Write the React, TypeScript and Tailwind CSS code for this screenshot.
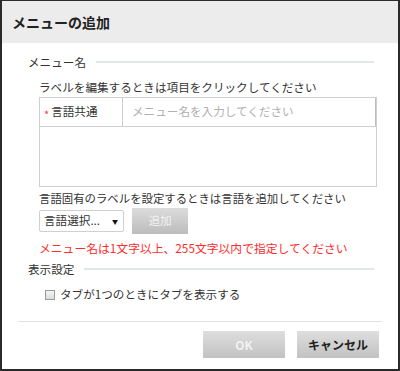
import React from "react";

const font = { fontFamily: '"Noto Sans CJK JP", "Noto Sans", sans-serif' };

const SectionTitle = ({ label }: { label: string }) => (
  <div className="flex items-center pl-[26px] pr-[24px] h-[16px]">
    <span className="text-[11.6px] leading-[16px] text-[#333] whitespace-nowrap">{label}</span>
    <div className="flex-1 h-[2px] bg-[#e2e7ea] ml-[10px]" />
  </div>
);

const App = () => {
  return (
    <div
      className="w-[400px] h-[371px] bg-white border-t border-l-2 border-r-2 border-b-2 border-[#2a2a2a] flex flex-col overflow-hidden"
      style={font}
    >
      <div className="h-[42px] bg-[#ececec] flex items-center pl-[10px] shrink-0">
        <span className="text-[14px] font-bold text-[#222]">メニューの追加</span>
      </div>

      <div className="mt-[11px]">
        <SectionTitle label="メニュー名" />
      </div>

      <div className="pl-[37px] pr-[24px]">
        <p className="mt-[9px] text-[11.6px] leading-[16px] text-[#333] whitespace-nowrap">
          ラベルを編集するときは項目をクリックしてください
        </p>

        <div className="mt-[2px] w-[338px] h-[90px] border border-[#cfcfcf] flex flex-col">
          <div className="h-[29px] flex border-b border-[#cfcfcf]">
            <div className="w-[83px] border-r border-[#cfcfcf] flex items-center pl-[4px]">
              <span className="text-[#ff3b3b] text-[11px] mr-[2px] leading-none translate-y-[2px]">*</span>
              <span className="text-[11.6px] text-[#333]">言語共通</span>
            </div>
            <div className="flex-1 flex items-center pl-[9px] border-r border-[#bdbdbd]">
              <span className="text-[11.6px] text-[#b0b0b0]">メニュー名を入力してください</span>
            </div>
          </div>
          <div className="flex-1" />
        </div>

        <p className="mt-[3px] text-[11.4px] leading-[16px] text-[#333] whitespace-nowrap">
          言語固有のラベルを設定するときは言語を追加してください
        </p>

        <div className="mt-[2px] flex items-center gap-[8px]">
          <div className="w-[85px] h-[22px] border border-[#d0d0d0] rounded-[2px] flex items-center justify-between pl-[4px] pr-[5px]">
            <span className="text-[11.6px] text-[#333]">言語選択...</span>
            <span className="text-[6px] text-[#111]">▼</span>
          </div>
          <div className="w-[56px] h-[26px] bg-gradient-to-b from-[#dcdcdc] to-[#bcbcbc] flex items-center justify-center">
            <span className="text-[11.6px] text-[#f2f2f2]">追加</span>
          </div>
        </div>

        <p className="mt-[6px] text-[11.8px] leading-[16px] text-[#ff2a2a] whitespace-nowrap">
          メニュー名は1文字以上、255文字以内で指定してください
        </p>
      </div>

      <div className="mt-[5px]">
        <SectionTitle label="表示設定" />
      </div>

      <div className="mt-[10px] pl-[43px] flex items-center h-[16px]">
        <div className="w-[10px] h-[10px] border border-[#9a9a9a] bg-gradient-to-b from-[#f4f4f4] to-[#dcdcdc]" />
        <span className="ml-[5px] text-[11.6px] text-[#333] whitespace-nowrap">
          タブが1つのときにタブを表示する
        </span>
      </div>

      <div className="mt-[18px] mx-[16px] h-px bg-[#dde3e6]" />

      <div className="mt-[9px] flex justify-end gap-[12px] pr-[19px]">
        <div className="w-[82px] h-[27px] bg-gradient-to-b from-[#dedede] to-[#c2c2c2] flex items-center justify-center">
          <span className="text-[12px] font-bold text-[#f2f2f2]">OK</span>
        </div>
        <div className="w-[82px] h-[27px] bg-gradient-to-b from-[#dedede] to-[#c2c2c2] flex items-center justify-center">
          <span className="text-[12px] font-bold text-[#222]">キャンセル</span>
        </div>
      </div>
    </div>
  );
};

export default App;
